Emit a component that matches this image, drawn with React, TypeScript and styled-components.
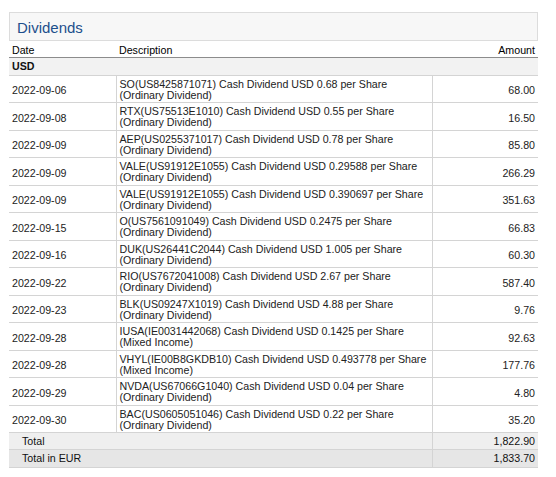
import React from "react";
import styled, { createGlobalStyle } from "styled-components";

const Global = createGlobalStyle`
  body {
    margin: 0;
    background: #fff;
    font-family: "Liberation Sans", Arial, sans-serif;
  }
`;

const Page = styled.div`
  padding: 12px 0 0 9px;
  width: 529px;
`;

const TitleBar = styled.div`
  height: 26px;
  border: 1px solid #dcdcdc;
  background: #f7f7f7;
  display: flex;
  align-items: center;
  padding-left: 7px;
  font-size: 15px;
  color: #1d4f8c;
  padding-top: 1px;
  box-sizing: content-box;
`;

const Table = styled.table`
  width: 529px;
  border-collapse: collapse;
  table-layout: fixed;
  font-size: 8pt;
  line-height: 11.25px;
  color: #222;
`;

const Th = styled.th<{ $right?: boolean }>`
  font-weight: normal;
  color: #000;
  text-align: ${(p) => (p.$right ? "right" : "left")};
  padding: 4px 3px 1px 3px;
  border-bottom: 1px solid #8c8c8c;
  height: 11px;
`;

const GroupCell = styled.td`
  background: #f2f2f2;
  font-weight: bold;
  color: #111;
  padding: 3px 3px 2px 3px;
  border-bottom: 1px solid #d4d4d4;
`;

const Td = styled.td<{ $right?: boolean; $divider?: boolean }>`
  padding: 3px 3px 1px 3px;
  text-align: ${(p) => (p.$right ? "right" : "left")};
  vertical-align: middle;
  border-bottom: 1px solid #d4d4d4;
  border-left: ${(p) => (p.$divider ? "1px solid #d4d4d4" : "none")};
`;

const DateCell = styled(Td)`
  padding-top: 5px;
`;

const AmountCell = styled(Td)`
  padding-top: 5px;
`;

const TotalCell = styled.td<{ $right?: boolean; $tone: string; $divider?: boolean }>`
  background: ${(p) => p.$tone};
  color: #111;
  padding: 3px 3px 2px ${(p) => (p.$right ? "3px" : "13px")};
  text-align: ${(p) => (p.$right ? "right" : "left")};
  border-bottom: 1px solid #d4d4d4;
  border-left: ${(p) => (p.$divider ? "1px solid #d4d4d4" : "none")};
`;

type Row = { date: string; desc: string; kind: string; amount: string };

const rows: Row[] = [
  { date: "2022-09-06", desc: "SO(US8425871071) Cash Dividend USD 0.68 per Share", kind: "(Ordinary Dividend)", amount: "68.00" },
  { date: "2022-09-08", desc: "RTX(US75513E1010) Cash Dividend USD 0.55 per Share", kind: "(Ordinary Dividend)", amount: "16.50" },
  { date: "2022-09-09", desc: "AEP(US0255371017) Cash Dividend USD 0.78 per Share", kind: "(Ordinary Dividend)", amount: "85.80" },
  { date: "2022-09-09", desc: "VALE(US91912E1055) Cash Dividend USD 0.29588 per Share", kind: "(Ordinary Dividend)", amount: "266.29" },
  { date: "2022-09-09", desc: "VALE(US91912E1055) Cash Dividend USD 0.390697 per Share", kind: "(Ordinary Dividend)", amount: "351.63" },
  { date: "2022-09-15", desc: "O(US7561091049) Cash Dividend USD 0.2475 per Share", kind: "(Ordinary Dividend)", amount: "66.83" },
  { date: "2022-09-16", desc: "DUK(US26441C2044) Cash Dividend USD 1.005 per Share", kind: "(Ordinary Dividend)", amount: "60.30" },
  { date: "2022-09-22", desc: "RIO(US7672041008) Cash Dividend USD 2.67 per Share", kind: "(Ordinary Dividend)", amount: "587.40" },
  { date: "2022-09-23", desc: "BLK(US09247X1019) Cash Dividend USD 4.88 per Share", kind: "(Ordinary Dividend)", amount: "9.76" },
  { date: "2022-09-28", desc: "IUSA(IE0031442068) Cash Dividend USD 0.1425 per Share", kind: "(Mixed Income)", amount: "92.63" },
  { date: "2022-09-28", desc: "VHYL(IE00B8GKDB10) Cash Dividend USD 0.493778 per Share", kind: "(Mixed Income)", amount: "177.76" },
  { date: "2022-09-29", desc: "NVDA(US67066G1040) Cash Dividend USD 0.04 per Share", kind: "(Ordinary Dividend)", amount: "4.80" },
  { date: "2022-09-30", desc: "BAC(US0605051046) Cash Dividend USD 0.22 per Share", kind: "(Ordinary Dividend)", amount: "35.20" },
];

export default function App() {
  return (
    <>
      <Global />
      <Page>
        <TitleBar>Dividends</TitleBar>
        <Table>
          <colgroup>
            <col style={{ width: 107 }} />
            <col style={{ width: 316 }} />
            <col style={{ width: 106 }} />
          </colgroup>
          <thead>
            <tr>
              <Th>Date</Th>
              <Th>Description</Th>
              <Th $right>Amount</Th>
            </tr>
          </thead>
          <tbody>
            <tr>
              <GroupCell colSpan={3}>USD</GroupCell>
            </tr>
            {rows.map((r, i) => (
              <tr key={i}>
                <DateCell>{r.date}</DateCell>
                <Td $divider>
                  {r.desc}
                  <br />
                  {r.kind}
                </Td>
                <AmountCell $right $divider>
                  {r.amount}
                </AmountCell>
              </tr>
            ))}
            <tr>
              <TotalCell $tone="#efefef" colSpan={2}>Total</TotalCell>
              <TotalCell $tone="#efefef" $right $divider>1,822.90</TotalCell>
            </tr>
            <tr>
              <TotalCell $tone="#e6e6e6" colSpan={2}>Total in EUR</TotalCell>
              <TotalCell $tone="#e6e6e6" $right $divider>1,833.70</TotalCell>
            </tr>
          </tbody>
        </Table>
      </Page>
    </>
  );
}
